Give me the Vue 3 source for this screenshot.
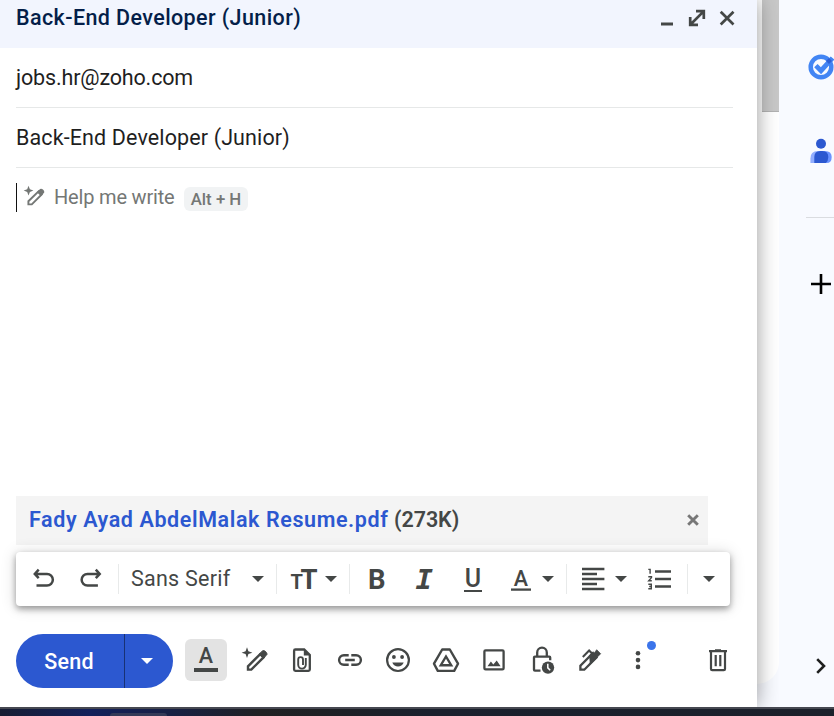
<script setup>
import { ref } from 'vue'

const subject = ref('Back-End Developer (Junior)')
const recipient = ref('jobs.hr@zoho.com')
</script>

<template>
  <div class="screen">
    <div class="workspace">
      <section class="compose">
        <header class="titlebar">
          <h1>{{ subject }}</h1>
          <div class="window-actions">
            <svg width="30" height="30" viewBox="0 0 30 30"><path d="M9 21h12" stroke="#444746" stroke-width="3" /></svg>
            <svg width="30" height="30" viewBox="0 0 30 30"><path d="M9 21L21.600 8.400M14 8.200h7.800V16M8.200 14v7.800H16" fill="none" stroke="#444746" stroke-width="2.700" /></svg>
            <svg width="30" height="30" viewBox="0 0 30 30"><path d="M8.700 8.700l12.800 12.800M21.500 8.700L8.700 21.500" stroke="#444746" stroke-width="2.700" /></svg>
          </div>
        </header>

        <div class="field"><span class="recipient">{{ recipient }}</span></div>
        <div class="field"><span class="subject">{{ subject }}</span></div>

        <div class="editor">
          <span class="caret"></span>
          <svg class="hint-icon" width="22" height="22" viewBox="0 0 22 22">
            <path d="M4.500 -.2L5.900 3.300 9.400 4.600 5.900 5.900 4.500 9.400 3.200 5.900-.3 4.600 3.200 3.300z" fill="#747775" />
            <path d="M4.400 18.400v-3.200L14.600 5.300l3.100 3.100-9.900 10z" fill="none" stroke="#747775" stroke-width="1.900" />
            <path d="M13.800 6.200l2.700-2.700c1-1 4 2 3 3L16.800 9.200z" fill="#747775" stroke="#747775" stroke-width="1.200" />
          </svg>
          <span class="hint">Help me write</span>
          <kbd>Alt + H</kbd>
        </div>

        <div class="attachment">
          <span class="filename">Fady Ayad AbdelMalak Resume.pdf</span>
          <span class="filesize">(273K)</span>
          <svg class="remove" width="12" height="12" viewBox="0 0 12 12"><path d="M1.200 1.200l9.600 9.600M10.800 1.200L1.200 10.800" stroke="#777" stroke-width="2.900" /></svg>
        </div>

        <div class="format-bar">
          <div class="group history">
            <svg width="22" height="22" viewBox="0 0 22 22"><path d="M6.700 1.600L2.800 5.900l3.900 4.200M3 5.900h12a5.800 5.800 0 010 11.700H4.500" fill="none" stroke="#444746" stroke-width="2.500" /></svg>
            <svg width="22" height="22" viewBox="0 0 22 22"><path d="M15.800 1.600l3.900 4.300-3.900 4.200M19.500 5.900h-12a5.800 5.800 0 000 11.700h10.400" fill="none" stroke="#444746" stroke-width="2.500" /></svg>
          </div>
          <div class="group family"><span class="font-name">Sans Serif</span><i class="arrow"></i></div>
          <div class="group size">
            <svg width="27" height="30" viewBox="0 0 27 30"><text class="glyph" x="-.4" y="24.800"><tspan font-size="20">T</tspan><tspan dx="-2.600" font-size="27.500">T</tspan></text></svg>
            <i class="arrow"></i>
          </div>
          <div class="group styles">
            <svg width="30" height="30" viewBox="0 0 30 30"><text class="glyph" x="6" y="24.700" font-size="27.500">B</text></svg>
            <svg width="30" height="30" viewBox="0 0 30 30"><text class="glyph slab" x="5.500" y="24.700" font-size="27" textLength="17.500" lengthAdjust="spacingAndGlyphs">I</text></svg>
            <svg width="30" height="30" viewBox="0 0 30 30"><text class="glyph medium" x="15" y="23" font-size="25" text-anchor="middle">U</text><path d="M6 27h18" stroke="#444746" stroke-width="2" /></svg>
            <span class="color-picker">
              <svg width="30" height="30" viewBox="0 0 30 30"><text class="glyph medium" x="15" y="22" font-size="21.500" text-anchor="middle">A</text><path d="M5 25.600h20" stroke="#444746" stroke-width="2.300" /></svg>
              <i class="arrow"></i>
            </span>
          </div>
          <div class="group paragraph">
            <svg width="23" height="24" viewBox="0 0 23 24"><path d="M0 2h22.400M0 7h15M0 12h22.400M0 17h15M0 22h22.400" stroke="#444746" stroke-width="2.300" /></svg>
            <i class="arrow"></i>
            <svg class="list" width="23" height="24" viewBox="0 0 23 24">
              <path d="M7 4.500h16M7 12h16M7 19.500h16" stroke="#444746" stroke-width="2.600" />
              <path d="M.3 2.400h1.800v4.400M.3 9.800h3.200v.8L.7 13.800h3.100M.3 17.300h3v4.400h-3M1.200 19.500h2" fill="none" stroke="#444746" stroke-width="1.400" />
            </svg>
          </div>
          <div class="group more"><i class="arrow"></i></div>
        </div>

        <footer class="actions">
          <div class="send"><button class="send-main">Send</button><button class="send-more"><i class="arrow light"></i></button></div>
          <button class="format-toggle">
            <svg width="42" height="42" viewBox="0 0 42 42"><text class="glyph toggle" x="21" y="24.300" font-size="21.500" text-anchor="middle">A</text><path d="M9 31h24" stroke="#444746" stroke-width="4" /></svg>
          </button>
          <div class="tools">
            <svg viewBox="0 0 30 30">
              <path d="M8 2.300l1.400 4 4 1.400-4 1.400-1.400 4-1.400-4-4-1.400 4-1.400z" fill="#444746" />
              <path d="M9 24.600v-3.300L21.200 9.100l3.300 3.300-12.200 12.200z" fill="none" stroke="#444746" stroke-width="2.400" />
              <path d="M20.200 9.200l3.200-3.300c1.700-1.700 5.900 2.600 4.200 4.200l-3.300 3.200z" fill="#444746" stroke="#444746" />
            </svg>
            <svg viewBox="0 0 30 30">
              <path d="M17.200 4.500H8.400Q7.100 4.500 7.100 5.800v18.700q0 1.300 1.300 1.300h13.100q1.300 0 1.300-1.300V10z" fill="none" stroke="#444746" stroke-width="2.300" />
              <path d="M16.800 4v6.500H23z" fill="#444746" />
              <path d="M18.800 13v6.800a3.800 3.800 0 01-7.600 0v-5.300a2.400 2.400 0 014.800 0V20" fill="none" stroke="#444746" stroke-width="1.900" />
            </svg>
            <svg viewBox="0 0 30 30"><path d="M13.700 10.200H8.900a4.800 4.800 0 000 9.600h4.800M16.300 10.200h4.800a4.800 4.800 0 010 9.600h-4.800M10.200 15h9.600" fill="none" stroke="#444746" stroke-width="2.400" /></svg>
            <svg viewBox="0 0 30 30">
              <circle cx="15" cy="15.100" r="10.900" fill="none" stroke="#444746" stroke-width="2.200" />
              <circle cx="10.900" cy="12" r="1.900" fill="#444746" /><circle cx="19.100" cy="12" r="1.900" fill="#444746" />
              <path d="M9.300 17.500h11.400c-1 2.500-3.300 3.900-5.700 3.900S10.200 20 9.300 17.500z" fill="#444746" />
            </svg>
            <svg viewBox="0 0 30 30">
              <path d="M11.200 4.500h7.600L27 18.700 23.200 25.900H6.800L3 18.700z" fill="none" stroke="#444746" stroke-width="2.400" stroke-linejoin="round" />
              <path d="M15 11.500L20.200 20.200H9.800z" fill="none" stroke="#444746" stroke-width="2.400" />
            </svg>
            <svg viewBox="0 0 30 30">
              <rect x="5.400" y="5.400" width="19.200" height="19" rx="1.200" fill="none" stroke="#444746" stroke-width="2.300" />
              <path d="M8.500 21.200l3.400-4.600 2.400 2.800 3.400-4 3.900 5.800z" fill="#444746" />
            </svg>
            <svg viewBox="0 0 30 30">
              <path d="M10.200 11V7.500a4.800 4.800 0 019.600 0V11M13.500 25.700H7.900Q7 25.700 7 24.800V12.500q0-.9.9-.9h14.400q.9 0 .9.900v2.700" fill="none" stroke="#444746" stroke-width="2.300" />
              <circle cx="21" cy="22.600" r="6.200" fill="#444746" /><path d="M20.800 18.700v4.200l2.400 2.400" fill="none" stroke="#fff" stroke-width="1.500" />
            </svg>
            <svg viewBox="0 0 30 30">
              <path d="M5.400 24.700v-4L17.600 8.500l3.900 3.900L9.300 24.700z" fill="none" stroke="#444746" stroke-width="2.300" />
              <path d="M14.600 10.300l3.600-3.600 1.200 1.200 2.300-3.200 4 4-10.500 10.500z" fill="#444746" stroke="#444746" stroke-width=".7" />
              <path d="M7.800 11.900l6.300-6.300 3 3" fill="none" stroke="#444746" stroke-width="2.100" />
            </svg>
            <span class="overflow">
              <svg viewBox="0 0 30 30"><circle v-for="y in [8.3, 15.1, 21.9]" :key="y" cx="15" :cy="y" r="2.300" fill="#444746" /></svg>
              <b class="badge"></b>
            </span>
          </div>
          <svg class="trash" viewBox="0 0 30 30">
            <path d="M8 7v17q0 1.200 1.200 1.200h11.600Q22 25.200 22 24V7M6 6.200h18M12 5.300h6M12.700 10v11.300M17.300 10v11.300" fill="none" stroke="#444746" stroke-width="2.200" />
          </svg>
        </footer>
      </section>

      <div class="gutter"><div class="inbox-edge"><div class="thumb"></div></div></div>

      <aside class="rail">
        <svg class="tasks" width="26" height="28" viewBox="0 0 26 28">
          <circle cx="13" cy="14" r="10.300" fill="none" stroke="#4285f4" stroke-width="4.500" />
          <path d="M7.900 12.600l5.100 5.100L24.500 5" fill="none" stroke="#4285f4" stroke-width="4.800" />
          <path d="M18 8l3-3 3 3-3 3z" fill="#2c5fd4" />
        </svg>
        <svg class="contacts" width="22" height="26" viewBox="0 0 22 26">
          <circle cx="11" cy="5.700" r="5" fill="#2c58d0" />
          <path d="M.4 25v-4.500q0-7.500 7.500-7.500h4v12z" fill="#91adff" />
          <path d="M10 13h5q6.700 0 6.700 6t-5 6H10z" fill="#6b93ff" />
          <path d="M4.300 25v-6q0-6 6-6h2q6 0 6 6 0 4-2.500 6z" fill="#2c58d0" />
        </svg>
        <hr>
        <svg class="plus" width="20" height="20" viewBox="0 0 20 20"><path d="M0 10h20M10 0v20" stroke="#000" stroke-width="2.600" /></svg>
        <svg class="chevron" width="10" height="16" viewBox="0 0 10 16"><path d="M1.200 1.200L8 8l-6.800 6.800" fill="none" stroke="#1f1f1f" stroke-width="2.600" /></svg>
      </aside>
    </div>
    <div class="taskbar"><span class="task-tab"></span></div>
  </div>
</template>

<style>
body { margin: 0; overflow: hidden; }
</style>

<style scoped>
* { box-sizing: border-box; }
svg { display: block; flex: none; overflow: visible; }
button { border: 0; padding: 0; margin: 0; font: inherit; }
.screen { width: 834px; height: 716px; display: flex; flex-direction: column; overflow: hidden; background: #f8faff; font-family: Roboto, "Liberation Sans", sans-serif; color: #1f1f1f; }
.workspace { height: 707px; display: flex; }
.compose { width: 757px; height: 707px; display: flex; flex-direction: column; background: #fff; box-shadow: 0 0 20px rgba(0, 0, 0, .4); z-index: 1; }
.titlebar { height: 48px; flex: none; display: flex; justify-content: space-between; padding: 3px 15px 0 16px; background: #f2f5fe; }
h1 { margin: 0; font-size: 21.500px; line-height: 30px; font-weight: 500; color: #041e49; letter-spacing: .4px; white-space: nowrap; }
.window-actions { display: flex; }
.field { height: 60px; flex: none; margin: 0 24px 0 16px; border-bottom: 1px solid #e6e8e8; font-size: 21.500px; line-height: 60px; white-space: nowrap; }
.recipient { letter-spacing: -.16px; }
.subject { letter-spacing: .12px; }
.editor { height: 328px; flex: none; display: flex; align-items: flex-start; padding: 15px 0 0 16px; }
.caret { width: 1px; height: 29px; background: #111; }
.hint-icon { margin: 3px 0 0 7px; }
.hint { width: 130px; margin-left: 8px; font-size: 20px; line-height: 29px; color: #747775; letter-spacing: -.18px; white-space: nowrap; }
kbd { width: 64px; height: 24px; margin-top: 4px; border-radius: 6px; background: #f1f3f4; color: #747775; font: 500 16.800px/24px Roboto, sans-serif; text-align: center; white-space: nowrap; }
.attachment { width: 692px; height: 49px; flex: none; margin-left: 16px; padding: 0 9px 2px 13px; display: flex; align-items: center; background: #f4f4f4; font-size: 21.500px; font-weight: 600; white-space: nowrap; }
.filename { width: 365px; color: #2c58d0; letter-spacing: .6px; }
.filesize { color: #444746; letter-spacing: -.05px; }
.remove { margin-left: auto; }
.format-bar { width: 714px; height: 54px; flex: none; margin: 7px 0 0 16px; display: flex; align-items: center; border-radius: 4px; background: #fff; box-shadow: 0 3px 6px rgba(0, 0, 0, .35), 0 1px 16px rgba(0, 0, 0, .16); }
.group { height: 30px; display: flex; align-items: center; flex: none; }
.group + .group { border-left: 1px solid #e8eaea; }
.history { width: 102px; padding-left: 16px; gap: 26px; }
.family { width: 158px; padding-left: 12px; }
.font-name { width: 121px; font-size: 21.500px; line-height: 30px; color: #444746; letter-spacing: .25px; white-space: nowrap; }
.arrow { width: 0; height: 0; flex: none; border: 6px solid transparent; border-top-color: #444746; border-bottom: 0; }
.light { border-top-color: #fff; }
.size { width: 73px; padding-left: 14px; gap: 7px; }
.styles { width: 217px; padding-left: 12px; gap: 18px; }
.color-picker { display: flex; align-items: center; gap: 6px; }
.paragraph { width: 121px; padding-left: 15px; gap: 10px; }
.list { margin-left: 11px; }
.more { padding-left: 15px; }
.glyph { font-family: Roboto, sans-serif; font-weight: 700; fill: #444746; }
.medium, .toggle { font-weight: 500; }
.slab { font-family: "DejaVu Sans Mono", monospace; font-style: italic; }
.actions { height: 54px; flex: none; margin: 28px 24px 0 16px; display: flex; align-items: center; }
.send { width: 157px; height: 54px; flex: none; display: flex; overflow: hidden; border-radius: 27px; background: #2c58d0; }
.send-main { width: 109px; padding-right: 2px; border-right: 1px solid #183174; background: transparent; color: #fff; font-size: 21.500px; font-weight: 500; letter-spacing: .2px; }
.send-more { width: 48px; padding-left: 16px; background: transparent; display: flex; align-items: center; }
.format-toggle { width: 42px; height: 42px; flex: none; margin: -2px 0 0 12px; border-radius: 6px; background: #e3e3e3; }
.tools { display: flex; gap: 18px; margin: -2px 0 0 12px; }
.tools svg, .trash { width: 30px; height: 30px; }
.overflow { position: relative; }
.badge { position: absolute; left: 23.700px; top: -4.300px; width: 9px; height: 9px; border-radius: 50%; background: #3b74ea; }
.trash { margin: -2px 0 0 auto; }
.gutter { width: 22px; height: 707px; flex: none; }
.inbox-edge { height: 684px; display: flex; justify-content: flex-end; background: #fff; border-bottom-right-radius: 22px; }
.thumb { width: 17px; height: 112px; background: #c8c8c8; border-bottom: 1px solid #b2b2b2; }
.rail { width: 55px; height: 707px; flex: none; display: flex; flex-direction: column; align-items: flex-start; background: #f8faff; overflow: hidden; z-index: 2; }
.tasks { margin: 53px 0 0 29px; }
.contacts { margin: 57px 0 0 31px; }
hr { width: 28px; height: 1px; margin: 53px 0 0 27px; border: 0; background: #dadce0; flex: none; }
.plus { margin: 56px 0 0 32px; }
.chevron { margin: 364px 0 0 37px; }
.taskbar { height: 9px; display: flex; align-items: flex-end; padding-left: 110px; border-top: 2px solid #464851; background: linear-gradient(90deg, #171d32 0, #13205a 90px, #182044 170px, #202123 260px, #1e2024 320px, #1a202d 430px, #1b202a 834px); z-index: 3; }
.task-tab { width: 57px; height: 3px; border-radius: 6px 6px 0 0; background: #343a57; }
</style>
